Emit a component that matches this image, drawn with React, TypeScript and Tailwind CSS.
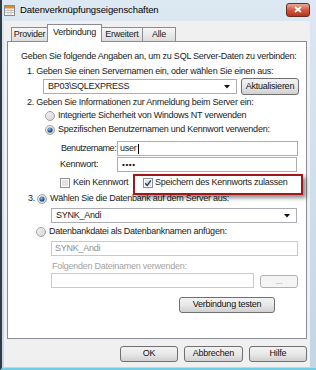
import type { ReactNode } from "react";

function Radio({ checked = false }: { checked?: boolean }) {
  return (
    <svg width="10" height="10" viewBox="0 0 10 10" className="shrink-0">
      <defs>
        <linearGradient id="rg" x1="0" y1="0" x2="1" y2="1">
          <stop offset="0" stopColor="#f6f6f6" />
          <stop offset="1" stopColor="#d2d2d2" />
        </linearGradient>
        <radialGradient id="rd" cx="0.4" cy="0.35" r="0.7">
          <stop offset="0" stopColor="#8cc4f0" />
          <stop offset="0.55" stopColor="#2a68a8" />
          <stop offset="1" stopColor="#163a62" />
        </radialGradient>
      </defs>
      <circle cx="5" cy="5" r="4.5" fill="url(#rg)" stroke="#8e8f8f" strokeWidth="0.8" />
      {checked && <circle cx="5" cy="5" r="2.6" fill="url(#rd)" />}
    </svg>
  );
}

function Check({ checked = false }: { checked?: boolean }) {
  return (
    <svg width="10" height="10" viewBox="0 0 10 10" className="shrink-0">
      <rect x="0.5" y="0.5" width="9" height="9" fill="#fff" stroke="#8e8f8f" />
      <rect x="2" y="2" width="6" height="6" fill="#e2e2e2" />
      {checked && (
        <path d="M2.2 5.2 L4.2 7.4 L7.9 2.4" fill="none" stroke="#1d3f74" strokeWidth="1.4" />
      )}
    </svg>
  );
}

function Arrow() {
  return (
    <svg width="6" height="4" viewBox="0 0 6 4" className="shrink-0">
      <path d="M0 0 H6 L3 3.5 Z" fill="#111" />
    </svg>
  );
}

function Btn({ children, w, disabled = false }: { children: ReactNode; w: string; disabled?: boolean }) {
  return (
    <div
      className={`${w} h-full flex items-center justify-center rounded-[3px] border ${
        disabled
          ? "border-[#adb2b5] bg-[#f4f4f4] text-[#9a9a9a]"
          : "border-[#707070] bg-gradient-to-b from-[#f2f2f2] via-[#e8e8e8] to-[#d0d0d0] text-[#111]"
      }`}
    >
      {children}
    </div>
  );
}

function Row({ children, className }: { children: ReactNode; className: string }) {
  return <div className={`flex items-center whitespace-nowrap ${className}`}>{children}</div>;
}

export default function App() {
  return (
    <div className="flex flex-col w-[316px] h-[370px] border-l-2 border-b-2 border-[#2f3c46] border-b-[#70cde4] bg-gradient-to-b from-[#dce8f2] to-[#c3d6e5] font-['Liberation_Sans',Arial,sans-serif] text-[9px] tracking-[-0.25px] text-[#1a1a1a] overflow-hidden">
      {/* Title bar */}
      <div className="h-[21px] flex items-center pl-[2px] pr-[6px]">
        <svg width="11" height="11" viewBox="0 0 11 11" className="shrink-0">
          <rect x="0.5" y="0.5" width="10" height="10" fill="#fbfbfb" stroke="#8a8a8a" />
          <rect x="1" y="1" width="9" height="2.5" fill="#e08a2c" />
          <path d="M1 5.5 H10 M1 7.5 H10 M4 3.5 V10 M7 3.5 V10" stroke="#b9b9b9" strokeWidth="0.8" />
        </svg>
        <span className="ml-[5px] text-[9.5px] tracking-[-0.1px] text-black">Datenverknüpfungseigenschaften</span>
        <div className="ml-auto mt-[-2px] w-[24px] h-[14px] rounded-[3px] border border-[#6b2b22] bg-gradient-to-b from-[#e9a99a] via-[#cf5a42] to-[#b8321c] flex items-center justify-center">
          <svg width="8" height="7" viewBox="0 0 8 7">
            <path d="M1 1 L7 6 M7 1 L1 6" stroke="#fff" strokeWidth="1.7" />
          </svg>
        </div>
      </div>

      {/* Client area */}
      <div className="flex-1 ml-[2px] mr-[6px] mb-[1px] bg-[#f0f0f0] flex flex-col">
        {/* Tabs */}
        <div className="h-[20px] flex items-end pl-[7px]">
          <div className="w-[37px] h-[14px] border border-b-0 border-[#898c95] bg-gradient-to-b from-[#f6f6f6] to-[#dcdcdc] flex items-center justify-center">
            Provider
          </div>
          <div className="relative z-10 -mb-[1px] -ml-[1px] w-[55px] h-[18px] border border-b-0 border-[#898c95] bg-white flex items-center justify-center pb-[2px]">
            Verbindung
          </div>
          <div className="-ml-[1px] w-[42px] h-[14px] border border-b-0 border-[#898c95] bg-gradient-to-b from-[#f6f6f6] to-[#dcdcdc] flex items-center justify-center">
            Erweitert
          </div>
          <div className="-ml-[1px] w-[34px] h-[14px] border border-b-0 border-[#898c95] bg-gradient-to-b from-[#f6f6f6] to-[#dcdcdc] flex items-center justify-center">
            Alle
          </div>
        </div>

        {/* Panel */}
        <div className="relative mx-[3px] h-[298px] border border-[#898c95] bg-white pt-[9px] flex flex-col">
          <Row className="h-[12px] pl-[13px]">Geben Sie folgende Angaben an, um zu SQL Server-Daten zu verbinden:</Row>
          <Row className="h-[12px] mt-[3px] pl-[19px]">1. Geben Sie einen Servernamen ein, oder wählen Sie einen aus:</Row>
          <Row className="h-[17px] pl-[35px] gap-[4px]">
            <div className="w-[194px] h-[15px] border border-[#abadb3] bg-white flex items-center pl-[4px] pr-[6px]">
              <span>BP03\SQLEXPRESS</span>
              <span className="ml-auto">
                <Arrow />
              </span>
            </div>
            <Btn w="w-[58px]">Aktualisieren</Btn>
          </Row>
          <Row className="h-[12px] mt-[2px] pl-[19px]">2. Geben Sie Informationen zur Anmeldung beim Server ein:</Row>
          <Row className="h-[12px] mt-[1px] pl-[37px] gap-[3px]">
            <Radio />
            <span>Integrierte Sicherheit von Windows NT verwenden</span>
          </Row>
          <Row className="h-[12px] mt-[2px] pl-[37px] gap-[3px]">
            <Radio checked />
            <span>Spezifischen Benutzernamen und Kennwort verwenden:</span>
          </Row>
          <Row className="h-[15px] mt-[5px] pl-[53px]">
            <span className="w-[56px] shrink-0 tracking-[-0.45px]">Benutzername:</span>
            <div className="w-[181px] h-full border border-[#abadb3] bg-white flex items-center pl-[2px]">
              user
              <span className="ml-[1px] w-px h-[10px] bg-black" />
            </div>
          </Row>
          <Row className="h-[15px] mt-[1px] pl-[52px]">
            <span className="w-[57px] shrink-0">Kennwort:</span>
            <div className="w-[180px] h-full border border-[#abadb3] bg-white flex items-center pl-[4px] text-[8px] tracking-[0.6px] font-bold leading-none">
              ••••
            </div>
          </Row>
          <Row className="h-[12px] mt-[5px] pl-[52px]">
            <div className="w-[83px] shrink-0 flex items-center gap-[3px]">
              <Check />
              <span>Kein Kennwort</span>
            </div>
            <div className="flex items-center gap-[2px]">
              <Check checked />
              <span>Speichern des Kennworts zulassen</span>
            </div>
          </Row>
          <Row className="h-[12px] mt-[4px] pl-[20px]">
            <span className="w-[9px]">3.</span>
            <Radio checked />
            <span className="ml-[3px]">Wählen Sie die Datenbank auf dem Server aus:</span>
          </Row>
          <Row className="h-[15px] mt-[3px] pl-[43px]">
            <div className="w-[246px] h-full border border-[#abadb3] bg-white flex items-center pl-[4px] pr-[6px]">
              <span>SYNK_Andi</span>
              <span className="ml-auto">
                <Arrow />
              </span>
            </div>
          </Row>
          <Row className="h-[12px] mt-[3px] pl-[28px] gap-[3px]">
            <Radio />
            <span>Datenbankdatei als Datenbanknamen anfügen:</span>
          </Row>
          <Row className="h-[15px] mt-[3px] pl-[43px]">
            <div className="w-[247px] h-full border border-[#c8cacf] bg-white flex items-center pl-[3px] text-[#8f8f8f]">
              SYNK_Andi
            </div>
          </Row>
          <Row className="h-[12px] mt-[5px] pl-[44px] text-[#a3a3a3]">Folgenden Dateinamen verwenden:</Row>
          <Row className="h-[15px] pl-[43px] gap-[6px]">
            <div className="w-[203px] h-full border border-[#c8cacf] bg-white" />
            <div className="h-[13px] mt-[2px]">
              <Btn w="w-[38px]" disabled>
                ...
              </Btn>
            </div>
          </Row>
          <Row className="h-[16px] mt-[9px] pl-[171px]">
            <Btn w="w-[96px]">Verbindung testen</Btn>
          </Row>

          {/* Highlight frame */}
          <div className="absolute left-[125px] top-[132px] w-[170px] h-[21px] border-2 border-[#a3161c] shadow-[3px_3px_4px_rgba(0,0,0,0.45)]" />
        </div>

        {/* Dialog buttons */}
        <div className="h-[16px] mt-[7px] flex justify-end gap-[6px] pr-[3px]">
          <Btn w="w-[58px]">OK</Btn>
          <Btn w="w-[59px]">Abbrechen</Btn>
          <Btn w="w-[58px]">Hilfe</Btn>
        </div>
      </div>
    </div>
  );
}
